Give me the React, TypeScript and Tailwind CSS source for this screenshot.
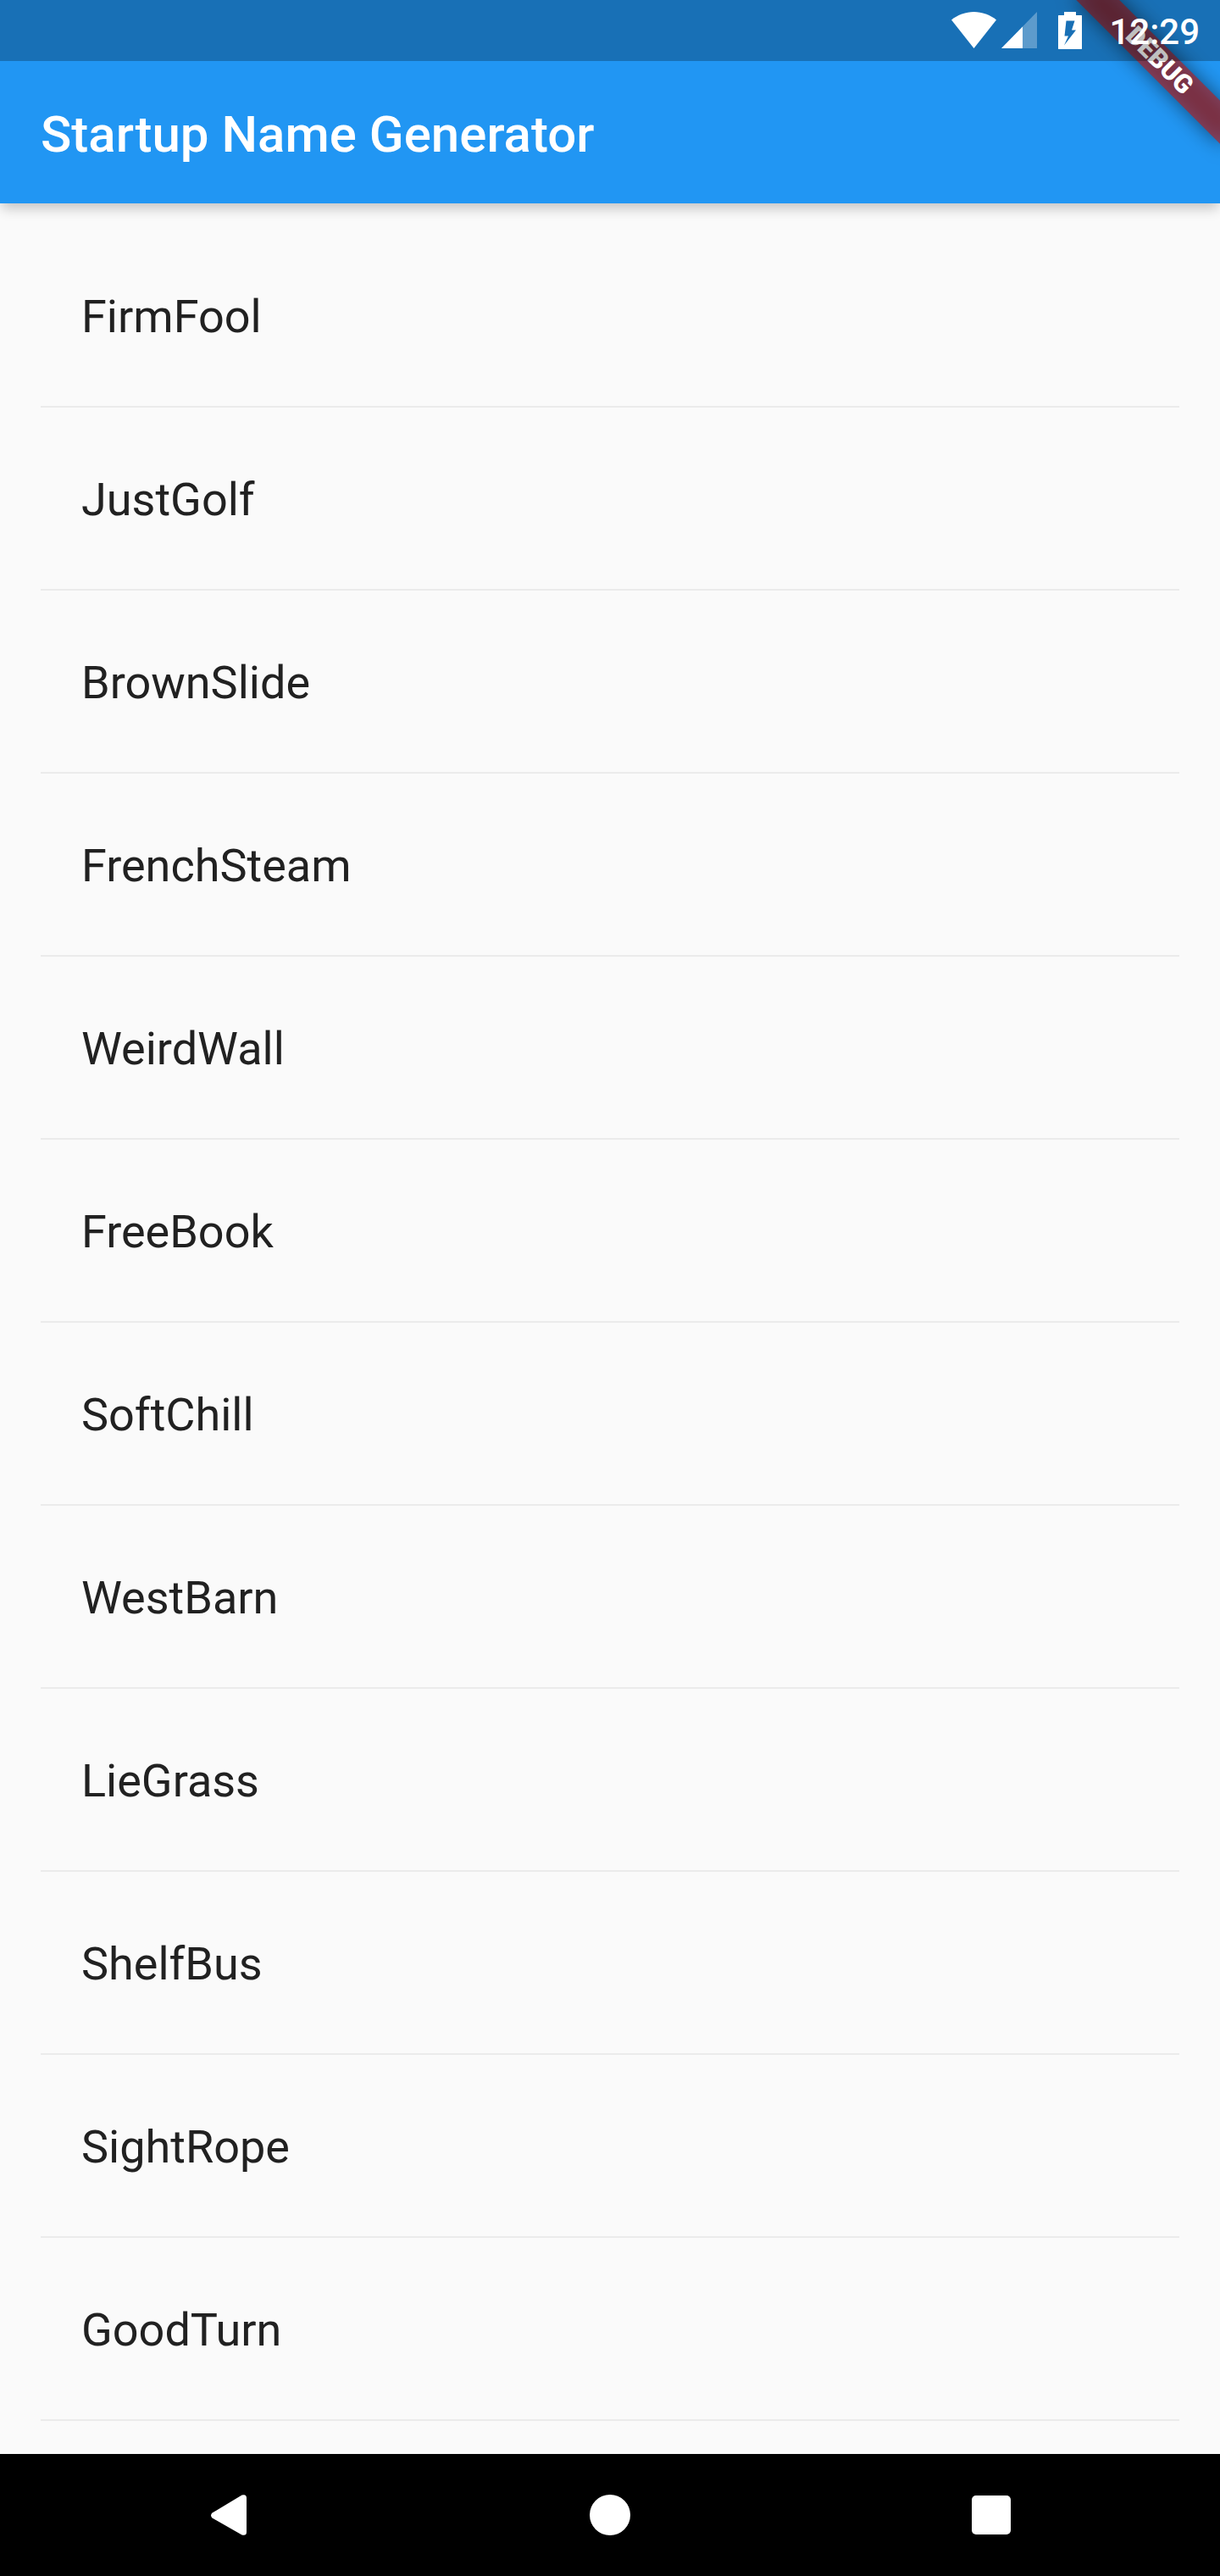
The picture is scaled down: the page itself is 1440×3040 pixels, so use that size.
const names = [
  'FirmFool', 'JustGolf', 'BrownSlide', 'FrenchSteam', 'WeirdWall', 'FreeBook',
  'SoftChill', 'WestBarn', 'LieGrass', 'ShelfBus', 'SightRope', 'GoodTurn',
];

function DebugBanner() {
  return (
    <div className="absolute top-0 right-0 h-[240px] w-[240px] overflow-hidden">
      <div className="absolute top-[84px] left-[120px] h-9 w-[240px] origin-[120px_-84px] rotate-45">
        <div className="absolute inset-0 bg-black/50 blur-[12px]" />
        <div className="relative flex h-9 items-center justify-center bg-[#b71c1ca0] pb-0.5 text-[30.6px] leading-none font-black text-white">
          DEBUG
        </div>
      </div>
    </div>
  );
}

function StatusBar() {
  return (
    <div className="relative flex h-[72px] items-start justify-end bg-black/25 pr-6">
      <svg className="mt-[14px] h-[43px] w-[54px]" viewBox="0 0 54 43" fill="white">
        <path d="M0 9.5C7.5 3.5 17 0 26.5 0S45.5 3.5 53 9.5L26.5 43Z" />
      </svg>
      <svg className="mt-[14px] ml-[5px] h-[43px] w-[42px]" viewBox="0 0 42 43" fill="white">
        <path d="M42 0V43H0Z" opacity=".3" />
        <path d="M25 17.4V43H0Z" />
      </svg>
      <svg className="mt-[14px] ml-[25px] h-11 w-7" viewBox="0 0 28 44" fill="white">
        <path fillRule="evenodd" d="M7 0H21V4H27.5L28 4.500V43.500L27.500 44H.5L0 43.500V4.500L.5 4H7ZM9.500 10.500L7.500 28.500H12L7 39.500L21 21.500H16L19.500 10.500Z" />
      </svg>
      <span className="mt-[13px] ml-8 text-[42px] leading-[50px] font-medium text-white">12:29</span>
    </div>
  );
}

export default function App() {
  return (
    <div className="flex h-[3040px] w-[1440px] flex-col overflow-hidden bg-[#fafafa] font-['Roboto',sans-serif]">
      <header className="relative h-[240px] shrink-0 bg-[#2196f3] shadow-[0_8px_14px_-2px_rgba(0,0,0,0.22)]">
        <DebugBanner />
        <StatusBar />
        <h1 className="flex h-[168px] items-center pt-[5px] pl-12 text-[60px] leading-[71px] font-medium tracking-[0.02px] text-white">Startup Name Generator</h1>
      </header>
      <ul className="flex-1 px-12 pt-12">
        {names.map((name) => (
          <li key={name} className="h-[216px]">
            <div className="flex h-[168px] items-center pt-[3px] pl-12 text-[54px] leading-[63px] text-[#212121]">{name}</div>
            <div className="mt-[23px] h-0.5 bg-[#ebebeb]" />
          </li>
        ))}
      </ul>
      <nav className="flex h-36 shrink-0 items-center bg-black pl-[249px]">
        <svg className="h-12 w-[42px]" viewBox="0 0 42 48" fill="white">
          <path d="M36.5 .5Q42-1 42 4V44Q42 49 36.5 47.5L1.5 27.5Q-1.5 24.5 1.5 21.5Z" />
        </svg>
        <div className="ml-[405px] size-12 rounded-full bg-white" />
        <div className="ml-[403px] size-[46px] rounded-[5px] bg-white" />
      </nav>
    </div>
  );
}
